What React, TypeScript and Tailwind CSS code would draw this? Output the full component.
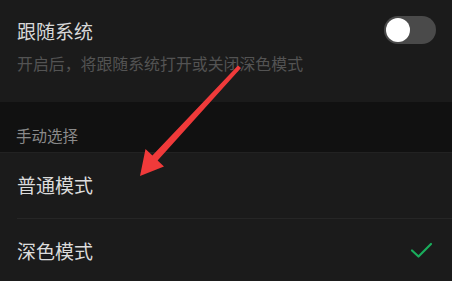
import React from "react";

export default function App() {
  return (
    <div
      className="relative w-[452px] h-[281px] overflow-hidden bg-[#1b1b1b]"
      style={{ fontFamily: '"Noto Sans CJK SC", "Noto Sans", sans-serif' }}
    >
      <div className="h-[102px] bg-[#1b1b1b] px-[17px] pt-[17px]">
        <div className="flex items-center justify-between">
          <span className="text-[19px] leading-[28px] text-[#d8d8d8]">跟随系统</span>
          <div className="mr-[-1px] mt-[-2px] flex h-[28px] w-[52px] items-center rounded-full bg-[#4a4a4a] px-[2px]">
            <div className="h-[24px] w-[24px] rounded-full bg-white" />
          </div>
        </div>
        <div className="mt-[8px] text-[15.9px] leading-[22px] text-[#535353]">
          开启后，将跟随系统打开或关闭深色模式
        </div>
      </div>
      <div className="flex h-[50px] items-center bg-[#111111] px-[16px] pt-[18px] text-[15.5px] text-[#8a8a8a]">
        手动选择
      </div>
      <div className="border-t border-[#222222] bg-[#1b1b1b]">
        <div className="flex h-[65px] items-center px-[17px] text-[19px] text-[#dcdcdc]">普通模式</div>
        <div className="ml-[17px] h-px bg-[#262626]" />
        <div className="flex h-[64px] items-center justify-between px-[17px] text-[19px] text-[#dcdcdc]">
          <span>深色模式</span>
          <svg width="26" height="20" viewBox="0 0 26 20" className="mr-0 mt-[-2px]">
            <path d="M3 10.5 L9.5 16.5 L22 4" fill="none" stroke="#1aad5c" strokeWidth="2.2" strokeLinecap="round" strokeLinejoin="round" />
          </svg>
        </div>
      </div>
      <svg className="absolute left-0 top-0" width="452" height="281" viewBox="0 0 452 281">
        <polygon
          points="238,65.5 241,68 157.6,160.4 164,166.5 140,176 145.5,149 152.4,155.6"
          fill="#f03a3a"
        />
      </svg>
    </div>
  );
}
